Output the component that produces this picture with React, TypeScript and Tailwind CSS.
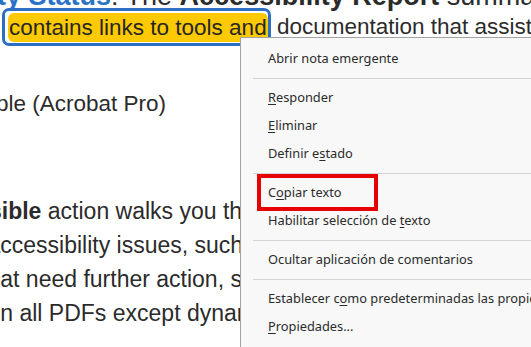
import React from "react";

const Item = ({ children }: { children: React.ReactNode }) => (
  <div className="h-[28px] flex items-center pl-[27px] whitespace-nowrap">
    <span>{children}</span>
  </div>
);

const Sep = () => (
  <div className="h-[11px] flex items-center pl-[12px]">
    <div className="h-px w-full bg-[#d4d4d4]" />
  </div>
);

const K = ({ children }: { children: React.ReactNode }) => (
  <u className="underline decoration-1 underline-offset-[2px]">{children}</u>
);

export default function App() {
  return (
    <div className="relative w-[531px] h-[347px] overflow-hidden bg-white">
      <div className="font-['Liberation_Sans',Arial,sans-serif] text-[22.5px] text-[#2b2b2b] whitespace-nowrap">
        <p className="text-[27px] leading-[30px] -mt-[19px] -ml-[18px]">
          <span className="font-bold text-[#2a72c8]">lity Status</span>
          <span>: The </span>
          <span className="font-bold">Accessibility Report</span>
          <span> summarizes</span>
        </p>
        <p className="leading-[30px] mt-[1px] ml-[2px]">
          <span className="rounded-[7px] border-[3px] border-[#2f6fc3] bg-white pt-[3.5px] pb-[4px] pl-[3px] pr-0">
            <span className="rounded-[6px] bg-[#fdc900] pt-[1.5px] pb-[3px] pl-[1px] pr-[1px] text-[#262626]">
              contains links to tools and
            </span>
          </span>
          <span> documentation that assists</span>
        </p>
        <p className="leading-[30px] mt-[47px] -ml-[4px]">ple (Acrobat Pro)</p>
        <div className="text-[23px] leading-[34px] mt-[75px]">
          <div className="-ml-[11px]">
            <span className="font-bold">sible</span> action walks you through
          </div>
          <div className="-ml-[12.5px]">accessibility issues, such as</div>
          <div className="-ml-[12.5px]">hat need further action, such</div>
          <div className="-ml-[12.5px]">on all PDFs except dynamic</div>
        </div>
      </div>

      <div className="absolute left-[240px] top-[37px] w-[330px] h-[330px] bg-[#f8f8f8] border border-[#a3a3a3] pt-[7px] font-['Noto_Sans',sans-serif] text-[12.8px] text-[#2b2b2b]">
        <Item>Abrir nota emergente</Item>
        <Sep />
        <Item>
          <K>R</K>esponder
        </Item>
        <Item>
          <K>E</K>liminar
        </Item>
        <Item>
          Definir e<K>s</K>tado
        </Item>
        <Sep />
        <Item>
          C<K>o</K>piar texto
        </Item>
        <Item>
          Habilitar selección de <K>t</K>exto
        </Item>
        <Sep />
        <Item>Ocultar aplicación de comentarios</Item>
        <Sep />
        <Item>
          Establecer c<K>o</K>mo predeterminadas las propiedades
        </Item>
        <Item>
          <K>P</K>ropiedades...
        </Item>
        <div className="absolute left-[16px] top-[136px] w-[121px] h-[37px] border-[4px] border-[#e60000]" />
      </div>
    </div>
  );
}
